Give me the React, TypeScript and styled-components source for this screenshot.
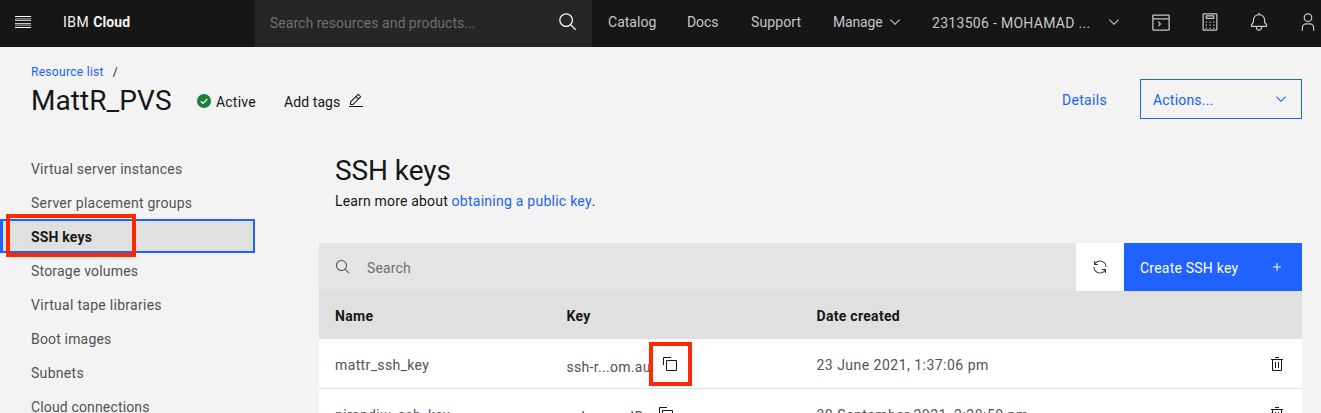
import React from 'react';
import styled, { createGlobalStyle } from 'styled-components';

const Global = createGlobalStyle`
  * { box-sizing: border-box; }
  html, body { margin: 0; height: 100%; overflow: hidden; background: #f3f3f3; }
  body { font-family: Roboto, "Liberation Sans", sans-serif; font-size: 14px; color: #161616; }
  p, h1, h2 { margin: 0; font-weight: 400; }
`;

const Text = styled.span<{ $ls?: number }>`
  display: inline-block;
  white-space: pre;
  letter-spacing: ${(p) => p.$ls ?? 0.3}px;
`;

const Page = styled.div`
  display: flex;
  flex-direction: column;
  width: 1321px;
  height: 413px;
  overflow: hidden;
`;

const TopBar = styled.header`
  display: flex;
  flex: none;
  align-items: stretch;
  height: 47px;
  background: #161616;
  color: #c6c6c6;
  line-height: 44px;
`;

const Brand = styled.div`
  display: flex;
  align-items: flex-start;
  width: 255px;
  padding-left: 15px;
  color: #f4f4f4;
  gap: 32px;
  svg { margin-top: 14px; }
  b { font-weight: 700; }
`;

const GlobalSearch = styled.div`
  display: flex;
  justify-content: space-between;
  width: 337px;
  padding: 1px 14px 0 15px;
  background: #262626;
  color: #6f6f6f;
  svg { margin-top: 11px; color: #f4f4f4; }
`;

const NavItems = styled.nav`
  display: flex;
  flex: none;
  padding-left: 16px;
`;

const NavItem = styled.div<{ $w: number; $drop?: number }>`
  display: flex;
  flex: none;
  justify-content: space-between;
  width: ${(p) => p.$w}px;
  padding: ${(p) => p.$drop ?? 0}px 29px 0 0;
  svg { flex: none; margin-top: ${(p) => 14 - (p.$drop ?? 0)}px; }
`;

const NavIcons = styled.div`
  display: flex;
  gap: 29px;
  padding-top: 12px;
  svg { flex: none; }
`;

const PageHead = styled.section`
  display: flex;
  flex: none;
  height: 97px;
  padding: 16px 19px 0 31px;
`;

const HeadMain = styled.div`
  flex: 1;
`;

const Crumbs = styled.div`
  display: flex;
  gap: 9px;
  font-size: 12px;
  line-height: 18px;
`;

const TitleRow = styled.div`
  display: flex;
  height: 42px;
  line-height: 42px;
`;

const Title = styled.h1`
  width: 165px;
  font-size: 28px;
  line-height: 40px;
`;

const Status = styled.div`
  display: flex;
  width: 88px;
  gap: 4px;
  svg { margin-top: 12px; }
`;

const Tags = styled.div`
  display: flex;
  gap: 8px;
  svg { margin-top: 12px; }
`;

const Link = styled.a`
  color: #2062f8;
`;

const DetailsLink = styled(Link)`
  width: 78px;
  padding-top: 16px;
  line-height: 42px;
`;

const ActionsButton = styled.button`
  display: flex;
  justify-content: space-between;
  width: 162px;
  height: 40px;
  margin-top: 16px;
  padding: 0 12px;
  border: 1px solid #1f62ff;
  background: transparent;
  color: #2062f8;
  font: inherit;
  line-height: 40px;
  svg { margin-top: 11px; }
`;

const Body = styled.div`
  display: flex;
  flex: 1;
  min-height: 0;
`;

const SideNav = styled.nav`
  flex: none;
  width: 255px;
  padding-top: 7px;
  color: #525252;
`;

const SideItem = styled.div<{ $active?: boolean }>`
  position: relative;
  height: 34px;
  padding-left: 31px;
  line-height: 36px;
  ${(p) =>
    p.$active &&
    `
    background: #e0e0e0;
    color: #161616;
    font-weight: 700;
    box-shadow: inset 3px 0 #1f62ff, inset 0 0 0 2px #1f62ff;
  `}
`;

const Callout = styled.i<{ $x: number; $y: number; $w: number; $h: number }>`
  position: absolute;
  left: ${(p) => p.$x}px;
  top: ${(p) => p.$y}px;
  width: ${(p) => p.$w}px;
  height: ${(p) => p.$h}px;
  border: 4px solid #ff2800;
`;

const Content = styled.main`
  width: 983px;
  margin-left: 64px;
`;

const Intro = styled.div`
  height: 99px;
  padding: 8px 16px 0;
  h2 { font-size: 28px; line-height: 38px; }
  p { line-height: 22px; }
`;

const Toolbar = styled.div`
  display: flex;
  height: 48px;
  line-height: 50px;
`;

const TableSearch = styled.div`
  display: flex;
  flex: 1;
  gap: 16px;
  padding-left: 16px;
  background: #e4e4e4;
  color: #6f6f6f;
  svg { margin-top: 16px; color: #525252; }
`;

const Refresh = styled.div`
  width: 48px;
  padding: 16px;
  background: #fff;
  color: #393939;
  line-height: 0;
`;

const CreateButton = styled.div`
  display: flex;
  justify-content: space-between;
  width: 178px;
  padding: 0 17px 0 16px;
  background: #1f62ff;
  color: #fff;
  svg { margin-top: 16px; }
`;

const Row = styled.div<{ $head?: boolean }>`
  display: grid;
  grid-template-columns: 231.5px 250px 1fr 17px;
  height: ${(p) => (p.$head ? 48 : 50)}px;
  padding: 0 16px;
  line-height: ${(p) => (p.$head ? 50 : 53)}px;
  background: ${(p) => (p.$head ? '#e0e0e0' : '#fff')};
  color: ${(p) => (p.$head ? '#161616' : '#525252')};
  font-weight: ${(p) => (p.$head ? 700 : 400)};
  border-bottom: ${(p) => (p.$head ? 0 : 1)}px solid #e0e0e0;
`;

const KeyCell = styled.div<{ $w: number }>`
  position: relative;
  display: flex;
  padding-top: 2px;
  > span { width: ${(p) => p.$w}px; }
  svg { flex: none; margin-top: 15px; color: #161616; }
`;

const DeleteCell = styled.div`
  padding-top: 17px;
  color: #161616;
  line-height: 0;
`;

const paths = {
  search:
    'M29,27.5859l-7.5521-7.5521a11.0177,11.0177,0,1,0-1.4141,1.4141L27.5859,29ZM4,13a9,9,0,1,1,9,9A9.01,9.01,0,0,1,4,13Z',
  chevron: 'M16 22L6 12 7.4 10.6 16 19.2 24.6 10.6 26 12z',
  edit: 'M2 26H30V28H2zM25.4 9c.8-.8.8-2 0-2.8l-3.6-3.6c-.8-.8-2-.8-2.8 0l-15 15V24h6.4L25.4 9zM20.4 4L24 7.6l-3 3L17.4 7 20.4 4zM6 22v-3.6l10-10 3.6 3.6-10 10H6z',
  copy: 'M28,10V28H10V10H28m0-2H10a2,2,0,0,0-2,2V28a2,2,0,0,0,2,2H28a2,2,0,0,0,2-2V10a2,2,0,0,0-2-2ZM4,18H2V4A2,2,0,0,1,4,2H18V4H4Z',
  trash:
    'M12 12H14V24H12zM18 12H20V24H18zM4 6V8H6V28a2 2 0 002 2H24a2 2 0 002-2V8h2V6zM8 28V8H24V28zM12 2H20V4H12z',
  renew:
    'M12 10H6.78A11 11 0 0127 16h2A13 13 0 006 7.68V4H4v8h8zM20 22h5.22A11 11 0 015 16H3a13 13 0 0023 8.32V28h2V20H20z',
  bell: 'M28.7071,19.293,26,16.5859V13a10.0136,10.0136,0,0,0-9-9.9492V1H15V3.0508A10.0136,10.0136,0,0,0,6,13v3.5859L3.2929,19.293A1,1,0,0,0,3,20v3a1,1,0,0,0,1,1h7v.7768a5.152,5.152,0,0,0,4.5,5.1987A5.0057,5.0057,0,0,0,21,25V24h7a1,1,0,0,0,1-1V20A1,1,0,0,0,28.7071,19.293ZM19,25a3,3,0,0,1-6,0V24h6Zm8-3H5V20.4141L7.707,17.707A1,1,0,0,0,8,17V13a8,8,0,0,1,16,0v4a1,1,0,0,0,.293.707L27,20.4141Z',
  user: 'M16 4a5 5 0 11-5 5 5 5 0 015-5m0-2a7 7 0 107 7A7 7 0 0016 2zM26 30H24V25a5 5 0 00-5-5H13a5 5 0 00-5 5v5H6V25a7 7 0 017-7h6a7 7 0 017 7z',
  calculator:
    'M26,4V28H6V4H26m0-2H6A2,2,0,0,0,4,4V28a2,2,0,0,0,2,2H26a2,2,0,0,0,2-2V4a2,2,0,0,0-2-2ZM9 25h2v2H9zM21 25h2v2h-2zM9 20h2v2H9zM21 20h2v2h-2zM9 15h2v2H9zM21 15h2v2h-2zM15 25h2v2h-2zM15 20h2v2h-2zM15 15h2v2h-2zM22 11H10a1 1 0 01-1-1V6a1 1 0 011-1H22a1 1 0 011 1v4A1 1 0 0122 11zM11 9H21V7H11z',
  terminal:
    'M28 4H4a2 2 0 00-2 2V28a2 2 0 002 2H28a2 2 0 002-2V6a2 2 0 00-2-2zM28 6v4H4V6zM4 28V12H28V28zM10.76 16.18L13.58 19.01 10.76 21.84 12.17 23.25 16.41 19.01 12.17 14.77z',
  plus: 'M17 15V8H15v7H8v2h7v7h2V17h7V15z',
};

const Icon = ({ name, size = 16 }: { name: keyof typeof paths; size?: number }) => (
  <svg width={size} height={size} viewBox="0 0 32 32" fill="currentColor">
    <path d={paths[name]} />
  </svg>
);

const navItems: [string, number][] = [
  ['Virtual server instances', 0.21],
  ['Server placement groups', 0.26],
  ['SSH keys', 0.18],
  ['Storage volumes', 0.2],
  ['Virtual tape libraries', 0.28],
  ['Boot images', 0.17],
  ['Subnets', 0.3],
  ['Cloud connections', 0.15],
];

export default function App() {
  return (
    <Page>
      <Global />
      <TopBar>
        <Brand>
          <svg width="16" height="16" viewBox="0 0 16 16">
            <path d="M0 2h16v1H0zM0 13h16v1H0z" fill="#fff" />
            <path d="M0 6h16v1H0zM0 9h16v1H0z" fill="#c6c6c6" />
            <path d="M0 5h16v1H0zM0 10h16v1H0z" fill="#555" />
            <path d="M0 4h16v1H0zM0 11h16v1H0z" fill="#777" />
          </svg>
          <div>
            <Text $ls={0.5}>IBM </Text>
            <b><Text $ls={0.1}>Cloud</Text></b>
          </div>
        </Brand>
        <GlobalSearch>
          <Text $ls={0.03}>Search resources and products...</Text>
          <Icon name="search" size={20} />
        </GlobalSearch>
        <NavItems>
          <NavItem $w={79}><Text $ls={0.02}>Catalog</Text></NavItem>
          <NavItem $w={64}><Text $ls={-0.1}>Docs</Text></NavItem>
          <NavItem $w={82}><Text $ls={0.1}>Support</Text></NavItem>
          <NavItem $w={99}>
            <Text $ls={-0.15}>Manage</Text>
            <Icon name="chevron" />
          </NavItem>
          <NavItem $w={219} $drop={1}>
            <Text>2313506 - MOHAMAD ...</Text>
            <Icon name="chevron" />
          </NavItem>
        </NavItems>
        <NavIcons>
          <Icon name="terminal" size={20} />
          <Icon name="calculator" size={20} />
          <Icon name="bell" size={20} />
          <Icon name="user" size={20} />
        </NavIcons>
      </TopBar>
      <PageHead>
        <HeadMain>
          <Crumbs>
            <Link><Text>Resource list</Text></Link>
            <Text>/</Text>
          </Crumbs>
          <TitleRow>
            <Title><Text $ls={0.07}>MattR_PVS</Text></Title>
            <Status>
              <svg width="16" height="16" viewBox="0 0 16 16">
                <circle cx="8" cy="8" r="7" fill="#1b8038" />
                <path d="M4.7 8.1L7 10.3l4.3-4.3" fill="none" stroke="#fff" strokeWidth="1.2" />
              </svg>
              <Text $ls={0.2}>Active</Text>
            </Status>
            <Tags>
              <Text $ls={0.08}>Add tags</Text>
              <Icon name="edit" />
            </Tags>
          </TitleRow>
        </HeadMain>
        <DetailsLink><Text>Details</Text></DetailsLink>
        <ActionsButton>
          <Text $ls={0.2}>Actions...</Text>
          <Icon name="chevron" />
        </ActionsButton>
      </PageHead>
      <Body>
        <SideNav>
          {navItems.map(([label, ls]) => (
            <SideItem key={label} $active={label === 'SSH keys'}>
              <Text $ls={ls}>{label}</Text>
              {label === 'SSH keys' && <Callout $x={6} $y={-5} $w={130} $h={43} />}
            </SideItem>
          ))}
        </SideNav>
        <Content>
          <Intro>
            <h2><Text $ls={-0.08}>SSH keys</Text></h2>
            <p>
              <Text $ls={0.18}>Learn more about </Text>
              <Link><Text $ls={0.25}>obtaining a public key</Text></Link>
              <Text>.</Text>
            </p>
          </Intro>
          <Toolbar>
            <TableSearch>
              <Icon name="search" />
              <Text $ls={0.15}>Search</Text>
            </TableSearch>
            <Refresh><Icon name="renew" /></Refresh>
            <CreateButton>
              <Text $ls={0.22}>Create SSH key</Text>
              <Icon name="plus" />
            </CreateButton>
          </Toolbar>
          <Row $head>
            <Text>Name</Text>
            <Text>Key</Text>
            <Text>Date created</Text>
          </Row>
          <Row>
            <Text $ls={0.37}>mattr_ssh_key</Text>
            <KeyCell $w={95.5}>
              <Text>ssh-r...om.au</Text>
              <Icon name="copy" />
              <Callout $x={82.5} $y={3} $w={43} $h={44} />
            </KeyCell>
            <Text $ls={0.48}>23 June 2021, 1:37:06 pm</Text>
            <DeleteCell><Icon name="trash" /></DeleteCell>
          </Row>
          <Row>
            <Text $ls={0.42}>nirandjw_ssh_key</Text>
            <KeyCell $w={91.5}>
              <Text>ssh-r...op.ID</Text>
              <Icon name="copy" />
            </KeyCell>
            <Text $ls={0.49}>30 September 2021, 2:28:50 pm</Text>
            <DeleteCell><Icon name="trash" /></DeleteCell>
          </Row>
        </Content>
      </Body>
    </Page>
  );
}
